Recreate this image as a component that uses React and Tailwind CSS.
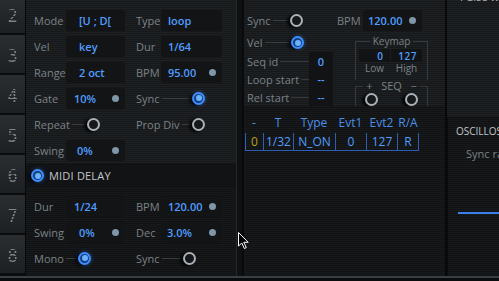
import React from 'react';

const scan = 'bg-[repeating-linear-gradient(180deg,#1e2123_0px,#1e2123_1px,#16181a_1px,#16181a_2px)]';
const scanDark = 'bg-[repeating-linear-gradient(180deg,#17191b_0px,#17191b_1px,#101213_1px,#101213_2px)]';

function Dot() {
  return <div className="w-[7px] h-[7px] rounded-full bg-[#7f96a8] shrink-0" />;
}

function Knob({ on }) {
  if (on) {
    return (
      <div className="w-[13px] h-[13px] rounded-full border-2 border-[#3d8dff] bg-[#173f7a] flex items-center justify-center shrink-0 shadow-[-3px_1px_3px_rgba(0,0,0,0.8),0_0_4px_rgba(60,140,255,0.5)]">
        <div className="w-[6px] h-[6px] rounded-full bg-[#6ab2ff]" />
      </div>
    );
  }
  return (
    <div className="w-[13px] h-[13px] rounded-full border-2 border-[#aab1b7] bg-[#15171a] shrink-0 shadow-[-3px_1px_3px_rgba(0,0,0,0.9)]" />
  );
}

function Toggle({ label, on, w }) {
  return (
    <div className={`flex items-center shrink-0 ${w}`}>
      <span className="text-[11px] text-[#7b8287] leading-none">{label}</span>
      <div className="flex-1 h-px bg-[#3a3f43] ml-[2px]" />
      <Knob on={on} />
    </div>
  );
}

// left column field: label 32px + box 59px
function LField({ label, value, dot, pl }) {
  return (
    <div className="flex items-center w-[91px] shrink-0">
      <span className="w-[32px] text-[11px] text-[#7b8287] leading-none">{label}</span>
      <div className={`w-[59px] h-[21px] rounded-[2px] bg-[#121416] flex items-center justify-between pr-[6px] ${pl}`}>
        <span className="text-[11px] font-semibold text-[#4f9dff] leading-none">{value}</span>
        {dot && <Dot />}
      </div>
    </div>
  );
}

// right column field: label 25px + box 61px
function RField({ label, value, dot, pl = 'pl-[7px]' }) {
  return (
    <div className="flex items-center shrink-0">
      <span className="w-[25px] text-[11px] text-[#7b8287] leading-none">{label}</span>
      <div className={`w-[61px] h-[21px] rounded-[2px] bg-[#121416] flex items-center justify-between pr-[6px] ${pl}`}>
        <span className="text-[11px] font-semibold text-[#4f9dff] leading-none">{value}</span>
        {dot && <Dot />}
      </div>
    </div>
  );
}

function Row({ children }) {
  return <div className="h-[26px] flex items-center">{children}</div>;
}

function Gap() {
  return <div className="w-[11px] shrink-0" />;
}

function Sidebar() {
  return (
    <div className="w-[26px] shrink-0 flex flex-col -mt-[5px] bg-[#0a0b0c] border-r border-[#070808]">
      {['2', '3', '4', '5', '6', '7', '8'].map((d) => (
        <div
          key={d}
          className="h-[40px] shrink-0 border-b-2 border-[#0b0c0d] bg-gradient-to-b from-[#2a2e31] to-[#1d2023] flex items-center justify-center pt-[4px]"
        >
          <span className="text-[17px] leading-none font-['DejaVu_Sans_Mono',monospace] text-transparent bg-clip-text bg-[repeating-linear-gradient(180deg,#7d8489_0px,#7d8489_2px,transparent_2px,transparent_3px)]">
            {d}
          </span>
        </div>
      ))}
    </div>
  );
}

function Panel1() {
  return (
    <div className={`w-[210px] shrink-0 flex flex-col ${scan}`}>
      <div className="flex flex-col pl-[8px] pt-[7px]">
        <Row>
          <LField label="Mode" value="[U ; D[" pl="pl-[13px]" />
          <Gap />
          <RField label="Type" value="loop" />
        </Row>
        <Row>
          <LField label="Vel" value="key" pl="pl-[13px]" />
          <Gap />
          <RField label="Dur" value="1/64" />
        </Row>
        <Row>
          <LField label="Range" value="2 oct" pl="pl-[13px]" />
          <Gap />
          <RField label="BPM" value="95.00" dot />
        </Row>
        <Row>
          <LField label="Gate" value="10%" dot pl="pl-[8px]" />
          <Gap />
          <Toggle label="Sync" on w="w-[69px]" />
        </Row>
        <Row>
          <div className="w-[91px] shrink-0">
            <Toggle label="Repeat" w="w-[66px]" />
          </div>
          <Gap />
          <Toggle label="Prop Div" w="w-[69px]" />
        </Row>
        <Row>
          <LField label="Swing" value="0%" dot pl="pl-[11px]" />
        </Row>
      </div>

      {/* MIDI DELAY header */}
      <div className="h-[25px] flex items-center pl-[5px] gap-[5px] bg-[#111315]">
        <Knob on />
        <span className="text-[11px] text-[#c3c7cb] leading-none tracking-[0.2px]">MIDI DELAY</span>
      </div>

      <div className={`flex-1 flex flex-col pl-[8px] pt-[5px] ${scanDark}`}>
        <Row>
          <LField label="Dur" value="1/24" pl="pl-[8px]" />
          <Gap />
          <RField label="BPM" value="120.00" dot />
        </Row>
        <Row>
          <LField label="Swing" value="0%" dot pl="pl-[13px]" />
          <Gap />
          <RField label="Dec" value="3.0%" dot pl="pl-[6px]" />
        </Row>
        <Row>
          <div className="w-[91px] shrink-0">
            <Toggle label="Mono" on w="w-[57px]" />
          </div>
          <Gap />
          <Toggle label="Sync" w="w-[60px]" />
        </Row>
      </div>
    </div>
  );
}

function SeqRow({ label, value }) {
  return (
    <div className="h-[18px] flex items-center">
      <span className="text-[11px] text-[#7b8287] leading-none whitespace-nowrap">{label}</span>
      <div className="flex-1 h-px bg-[#33373b] ml-[2px]" />
      <div className="w-[24px] h-full bg-[#111315] flex items-center justify-center">
        <span className="text-[11px] font-semibold text-[#4f9dff] leading-none">{value}</span>
      </div>
    </div>
  );
}

function Panel2() {
  const cols = 'grid grid-cols-[18px_30px_42px_31px_31px_22px]';
  const head = ['-', 'T', 'Type', 'Evt1', 'Evt2', 'R/A'];
  const data = ['0', '1/32', 'N_ON', '0', '127', 'R'];
  return (
    <div className={`w-[201px] shrink-0 flex flex-col ${scan}`}>
      <div className="flex pt-[7px] h-[106px]">
        {/* left column */}
        <div className="w-[89px] shrink-0 pl-[3px] flex flex-col">
          <div className="h-[26px] flex items-center">
            <Toggle label="Sync" w="w-[56px]" />
          </div>
          <div className="h-[19px] flex items-center">
            <Toggle label="Vel" on w="w-[57px]" />
          </div>
          <SeqRow label="Seq id" value="0" />
          <SeqRow label="Loop start" value="--" />
          <SeqRow label="Rel start" value="--" />
        </div>

        {/* right column */}
        <div className="ml-[4px] flex flex-col">
          <div className="h-[26px] flex items-center">
            <span className="w-[26px] text-[11px] text-[#7b8287] leading-none">BPM</span>
            <div className="w-[59px] h-[21px] rounded-[2px] bg-[#121416] flex items-center justify-between pl-[5px] pr-[6px]">
              <span className="text-[11px] font-semibold text-[#4f9dff] leading-none">120.00</span>
              <Dot />
            </div>
          </div>

          <fieldset className="ml-[18px] w-[73px] h-[45px] mt-[2px] border border-b-0 border-[#363a3e] px-[3px]">
            <legend className="mx-auto px-[3px] text-[10px] leading-[12px] text-[#7b8287]">Keymap</legend>
            <div className="flex gap-[1px] mt-[2px]">
              <div className="w-[31px] h-[13px] bg-[#111315] flex items-center justify-end pr-[7px]">
                <span className="text-[10px] font-semibold text-[#4f9dff] leading-none">0</span>
              </div>
              <div className="w-[31px] h-[13px] bg-[#111315] flex items-center justify-end pr-[5px]">
                <span className="text-[10px] font-semibold text-[#4f9dff] leading-none tracking-[0.5px]">127</span>
              </div>
            </div>
            <div className="flex gap-[1px] h-[12px] items-center">
              <span className="w-[31px] text-center text-[10px] text-[#7b8287] leading-none">Low</span>
              <span className="w-[31px] text-center text-[10px] text-[#7b8287] leading-none">High</span>
            </div>
          </fieldset>

          <fieldset className="ml-[18px] w-[73px] h-[26px] border border-b-0 border-[#363a3e]">
            <legend className="mx-auto px-[3px] text-[11px] leading-[12px] text-[#7b8287] whitespace-pre">+   SEQ   −</legend>
            <div className="flex justify-between px-[9px] pt-[1px]">
              <Knob />
              <Knob />
            </div>
          </fieldset>
        </div>
      </div>

      <div className={`flex-1 flex flex-col pt-[7px] pl-[1px] ${scanDark}`}>
        <div className={`${cols} h-[20px] items-center`}>
          {head.map((h) => (
            <span key={h} className="text-center text-[12px] text-[#4a8fe8] leading-none">{h}</span>
          ))}
        </div>
        <div className={`${cols} h-[18px]`}>
          {data.map((d, i) => (
            <div
              key={i}
              className={`flex items-center justify-center border-l border-b border-[#2f5fb5] ${i === 5 ? 'border-r' : ''}`}
            >
              <span className={`text-[12px] leading-none ${i === 0 ? 'text-[#b8a21c]' : 'text-[#4f9dff]'}`}>{d}</span>
            </div>
          ))}
        </div>
      </div>
    </div>
  );
}

function Panel3() {
  return (
    <div className={`flex-1 min-w-0 overflow-hidden flex flex-col ${scan}`}>
      <div className="h-[117px] overflow-hidden">
        <span className="block -mt-[9px] pl-[13px] text-[11px] text-[#aeb3b8] leading-[12px] whitespace-nowrap">Pulse width</span>
      </div>
      <div className={`flex-1 flex flex-col border-t border-l border-[#0b0c0d] ${scanDark}`}>
        <span className="pl-[8px] pt-[7px] text-[10px] text-[#c2c6ca] leading-[13px] whitespace-nowrap">OSCILLOSCOPE</span>
        <span className="pl-[18px] pt-[9px] text-[11px] text-[#7b8287] leading-[13px] whitespace-nowrap">Sync rate</span>
        <div className="ml-[10px] mt-[52px] h-[2px] bg-[#3a7fe6]" />
      </div>
    </div>
  );
}

export default function App() {
  return (
    <div className="w-[499px] h-[281px] overflow-hidden relative bg-[#0b0c0d] font-['Open_Sans',sans-serif] flex flex-col">
      <div className="flex h-[276px] overflow-hidden">
        <Sidebar />
        <Panel1 />
        <div className="w-[8px] shrink-0 bg-[#0e1011] border-l border-[#25282b] border-r-2 border-r-[#090a0b]" />
        <Panel2 />
        <div className="w-[2px] shrink-0 bg-[#08090a]" />
        <Panel3 />
      </div>
      <div className="h-[2px] bg-[#3a3f44]" />
      <div className="flex-1 bg-[#0b0c0d]" />

      {/* mouse pointer */}
      <svg className="absolute left-[238px] top-[232px]" width="12" height="18" viewBox="0 0 12 18">
        <path d="M0.5 0.5 L0.5 14 L3.8 11 L6.3 16.5 L8.3 15.6 L5.8 10.3 L10.2 10.3 Z" fill="#000" stroke="#fff" strokeWidth="1" />
      </svg>
    </div>
  );
}
